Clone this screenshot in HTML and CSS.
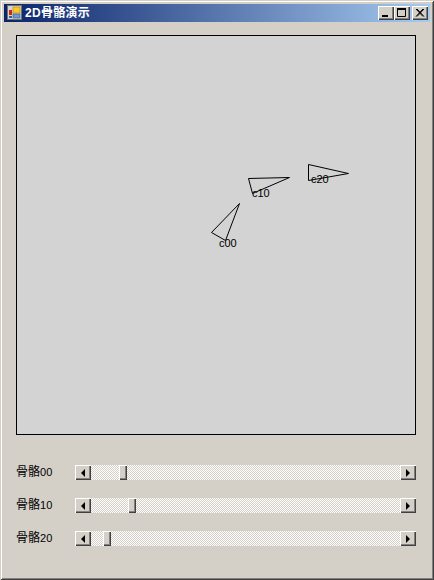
FILE: index.html
```html
<!DOCTYPE html>
<html lang="zh">
<head>
<meta charset="utf-8">
<title>2D骨骼演示</title>
<link rel="stylesheet" href="styles.css">
</head>
<body>
<div class="window">
  <div class="titlebar">
    <svg class="app-icon" width="16" height="16" viewBox="0 0 16 16">
      <rect x="0.5" y="0.5" width="14" height="14" fill="#d8d4cc" stroke="#707070"/>
      <rect x="6" y="2" width="7" height="6" fill="#f8c828" stroke="#b08010" stroke-width="0.6"/>
      <rect x="2" y="5" width="3" height="5" fill="#c82818"/>
      <rect x="2" y="11" width="3" height="2" fill="#3060a8"/>
      <rect x="6" y="9" width="7" height="4" fill="#6c9ad8" stroke="#305888" stroke-width="0.6"/>
    </svg>
    <span class="title-text">2D骨骼演示</span>
    <div class="caption-buttons">
      <button class="cap">
        <svg width="16" height="14" viewBox="0 0 16 14"><rect x="4" y="9" width="6" height="2" fill="#000"/></svg>
      </button>
      <button class="cap">
        <svg width="16" height="14" viewBox="0 0 16 14"><path d="M3.5 3.5h8v7h-8z" fill="none" stroke="#000"/><rect x="3" y="2" width="9" height="2" fill="#000"/></svg>
      </button>
      <button class="cap cap-close">
        <svg width="16" height="14" viewBox="0 0 16 14"><path d="M4 3l7 7.5M5 3l7 7.5M11 3l-7 7.5M12 3l-7 7.5" fill="none" stroke="#000"/></svg>
      </button>
    </div>
  </div>
  <div class="client">
    <div class="canvas">
      <svg class="bones" width="398" height="398" viewBox="17 36 398 398">
        <path d="M239.5 203.5L211.5 232.5L225.5 240.5Z" fill="none" stroke="#000"/>
        <path d="M248.5 178.5L289.5 177.5L252.5 193.5Z" fill="none" stroke="#000"/>
        <path d="M308.5 164.5L348.5 173.5L308.5 180.5Z" fill="none" stroke="#000"/>
      </svg>
      <span class="bone-label label-c00">c00</span>
      <span class="bone-label label-c10">c10</span>
      <span class="bone-label label-c20">c20</span>
    </div>
    <div class="controls">
      <div class="row">
        <span class="label">骨骼<span class="num">00</span></span>
        <div class="scrollbar">
          <button class="arrow"><span class="tri tri-left"></span></button>
          <div class="track track-a"><div class="thumb"></div></div>
          <button class="arrow"><span class="tri tri-right"></span></button>
        </div>
      </div>
      <div class="row">
        <span class="label">骨骼<span class="num">10</span></span>
        <div class="scrollbar">
          <button class="arrow"><span class="tri tri-left"></span></button>
          <div class="track track-b"><div class="thumb"></div></div>
          <button class="arrow"><span class="tri tri-right"></span></button>
        </div>
      </div>
      <div class="row">
        <span class="label">骨骼<span class="num">20</span></span>
        <div class="scrollbar">
          <button class="arrow"><span class="tri tri-left"></span></button>
          <div class="track track-c"><div class="thumb"></div></div>
          <button class="arrow"><span class="tri tri-right"></span></button>
        </div>
      </div>
    </div>
  </div>
</div>
</body>
</html>
```
FILE: styles.css
```css
* { box-sizing: border-box; }
html, body { margin: 0; padding: 0; background: #d4d0c8; }
.window {
  width: 434px;
  height: 580px;
  padding: 4px;
  background: #d4d0c8;
  overflow: hidden;
  box-shadow: inset 1px 1px 0 #d4d0c8, inset -1px -1px 0 #404040, inset 2px 2px 0 #fff, inset -2px -2px 0 #808080;
}
.titlebar {
  height: 18px;
  display: flex;
  align-items: center;
  padding: 0 2px 0 3px;
  background: linear-gradient(to right, #0a246a, #a6caf0);
}
.app-icon { flex: none; margin-right: 2px; }
.title-text {
  color: #fff;
  font: bold 12px "Liberation Sans", "Noto Sans CJK SC", sans-serif;
  line-height: 18px;
  letter-spacing: 0.3px;
}
.caption-buttons { margin-left: auto; display: flex; }
.cap, .arrow, .thumb {
  display: block;
  padding: 0;
  background: #d4d0c8;
  border: 0;
  box-shadow: inset 1px 1px 0 #fff, inset -1px -1px 0 #404040, inset -2px -2px 0 #808080;
}
.cap { width: 16px; height: 14px; }
.cap svg { display: block; }
.cap-close { margin-left: 2px; }
.client { padding: 13px 12px 0; }
.canvas {
  position: relative;
  width: 400px;
  height: 400px;
  border: 1px solid #000;
  background: #d3d3d3;
}
.bones { display: block; }
.bone-label {
  position: absolute;
  font: 11px/12px "Liberation Sans", sans-serif;
  color: #000;
}
.label-c00 { left: 202px; top: 201px; }
.label-c10 { left: 235px; top: 151px; }
.label-c20 { left: 294px; top: 137px; }
.controls {
  margin-top: 30px;
  display: flex;
  flex-direction: column;
  gap: 18px;
}
.row { display: flex; align-items: center; height: 15px; }
.label {
  width: 59px;
  flex: none;
  padding-bottom: 2px;
  font: 12px/15px "Noto Sans CJK SC", sans-serif;
  color: #000;
}
.num { font: 11px/15px "Liberation Sans", sans-serif; }
.scrollbar { display: flex; width: 341px; height: 15px; }
.arrow { width: 16px; height: 15px; flex: none; display: flex; align-items: center; justify-content: center; }
.tri { width: 0; height: 0; border-style: solid; border-color: transparent; }
.tri-left { border-width: 4px 4px 4px 0; border-right-color: #000; }
.tri-right { border-width: 4px 0 4px 4px; border-left-color: #000; }
.track {
  flex: 1;
  background-color: #d4d0c8;
  background-image: conic-gradient(#fff 25%, transparent 0 50%, #fff 0 75%, transparent 0);
  background-size: 2px 2px;
  display: flex;
}
.track-a { padding-left: 28px; }
.track-b { padding-left: 37px; }
.track-c { padding-left: 12px; }
.thumb { width: 8px; height: 15px; }
```
